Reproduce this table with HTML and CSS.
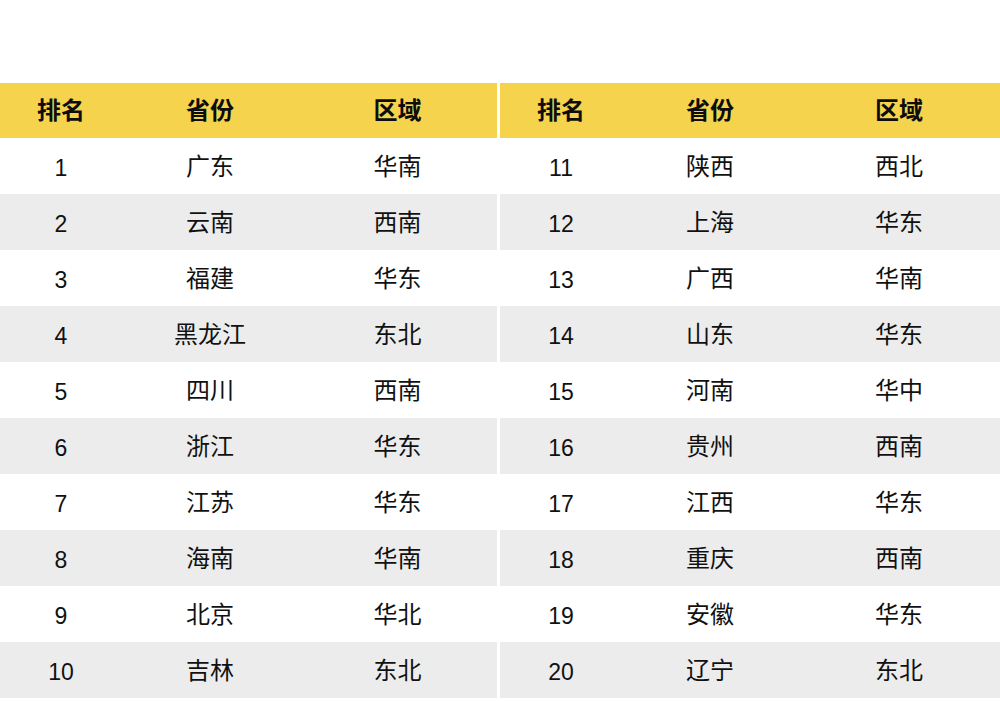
FILE: index.html
```html
<!DOCTYPE html>
<html lang="zh-CN">
<head>
<meta charset="utf-8">
<title>省份排名</title>
<link rel="stylesheet" href="styles.css">
</head>
<body>
<div class="page">
  <div class="tables">
    <table class="rank">
      <thead><tr><th>排名</th><th>省份</th><th>区域</th></tr></thead>
      <tbody>
        <tr><td>1</td><td>广东</td><td>华南</td></tr>
        <tr><td>2</td><td>云南</td><td>西南</td></tr>
        <tr><td>3</td><td>福建</td><td>华东</td></tr>
        <tr><td>4</td><td>黑龙江</td><td>东北</td></tr>
        <tr><td>5</td><td>四川</td><td>西南</td></tr>
        <tr><td>6</td><td>浙江</td><td>华东</td></tr>
        <tr><td>7</td><td>江苏</td><td>华东</td></tr>
        <tr><td>8</td><td>海南</td><td>华南</td></tr>
        <tr><td>9</td><td>北京</td><td>华北</td></tr>
        <tr><td>10</td><td>吉林</td><td>东北</td></tr>
      </tbody>
    </table>
    <table class="rank">
      <thead><tr><th>排名</th><th>省份</th><th>区域</th></tr></thead>
      <tbody>
        <tr><td>11</td><td>陕西</td><td>西北</td></tr>
        <tr><td>12</td><td>上海</td><td>华东</td></tr>
        <tr><td>13</td><td>广西</td><td>华南</td></tr>
        <tr><td>14</td><td>山东</td><td>华东</td></tr>
        <tr><td>15</td><td>河南</td><td>华中</td></tr>
        <tr><td>16</td><td>贵州</td><td>西南</td></tr>
        <tr><td>17</td><td>江西</td><td>华东</td></tr>
        <tr><td>18</td><td>重庆</td><td>西南</td></tr>
        <tr><td>19</td><td>安徽</td><td>华东</td></tr>
        <tr><td>20</td><td>辽宁</td><td>东北</td></tr>
      </tbody>
    </table>
  </div>
</div>
</body>
</html>
```
FILE: styles.css
```css
html, body {
  margin: 0;
  padding: 0;
  background: #ffffff;
}
body {
  font-family: "Noto Sans CJK SC", sans-serif;
  color: #111111;
}
.page {
  width: 1000px;
  height: 701px;
  padding-top: 83px;
  box-sizing: border-box;
}
.tables {
  display: grid;
  grid-template-columns: 497px 500px;
  column-gap: 3px;
}
.rank {
  border-collapse: collapse;
  table-layout: fixed;
  width: 100%;
}
.rank th:nth-child(1), .rank td:nth-child(1) { width: 122px; }
.rank th:nth-child(2), .rank td:nth-child(2) { width: 176px; }
.rank th {
  background: #f6d34c;
  height: 55px;
  padding: 0 0 3px 0;
  box-sizing: border-box;
  font-size: 24px;
  line-height: 1;
  font-weight: 700;
  text-align: center;
  color: #0d0d0d;
}
.rank td {
  height: 56px;
  padding: 0 0 2px 0;
  box-sizing: border-box;
  font-size: 24px;
  line-height: 1;
  text-align: center;
  color: #111111;
}
.rank td:nth-child(1) {
  font-family: "Liberation Sans", sans-serif;
  font-size: 23px;
  padding: 4px 0 0 0;
}
.rank tbody tr:nth-child(even) td {
  background: #ececec;
}
```
